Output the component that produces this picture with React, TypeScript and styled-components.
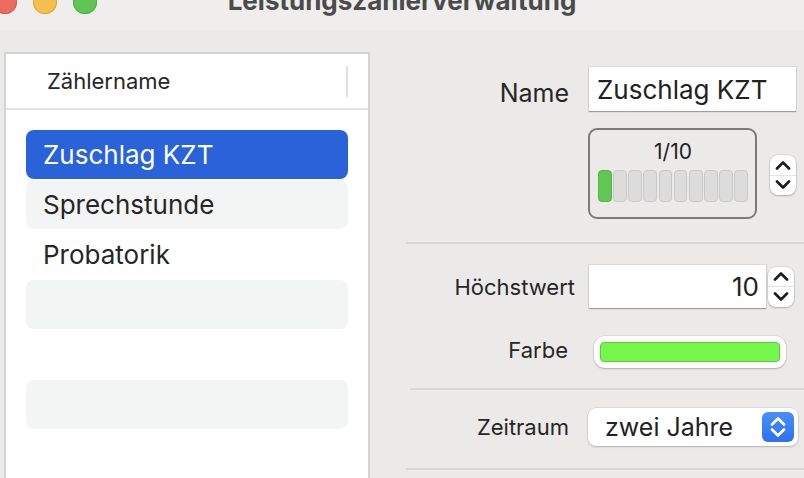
import React from 'react';
import styled, { createGlobalStyle } from 'styled-components';

const Global = createGlobalStyle`
  html, body { margin: 0; padding: 0; width: 804px; height: 478px; overflow: hidden; background: #ebeae8; }
  body { font-family: Inter, "Noto Sans", "Liberation Sans", sans-serif; color: #252525; }
`;

const Window = styled.div`
  width: 804px;
  height: 478px;
  display: flex;
  flex-direction: column;
  overflow: hidden;
  background: #ebeae8;
`;

const TitleBar = styled.div`
  height: 30px;
  flex: none;
  background: #efeeed;
  display: grid;
  grid-template-columns: 1fr auto 1fr;
  align-items: start;
  overflow: hidden;
`;

const Lights = styled.div`
  display: flex;
  gap: 16px;
  margin: -10px 0 0 -7px;
`;

const Light = styled.span<{ $c: string; $b: string }>`
  width: 24px;
  height: 24px;
  border-radius: 50%;
  background: ${(p) => p.$c};
  box-shadow: inset 0 0 0 1px ${(p) => p.$b};
`;

const Title = styled.div`
  font-size: 26px;
  line-height: 26px;
  font-weight: 700;
  color: #4b4b4b;
  margin-top: -12px;
  white-space: nowrap;
`;

const Body = styled.div`
  flex: 1;
  display: flex;
  min-height: 0;
`;

const Sidebar = styled.div`
  width: 366px;
  flex: none;
  box-sizing: border-box;
  margin: 22px 0 0 4px;
  border: 2px solid #d4d3d2;
  border-bottom: none;
  background: #fff;
  display: flex;
  flex-direction: column;
`;

const TableHeader = styled.div`
  height: 56px;
  box-sizing: border-box;
  border-bottom: 2px solid #e3e3e3;
  display: flex;
  align-items: center;
  justify-content: space-between;
  padding: 0 20px 0 41px;
  font-size: 22px;
  color: #262626;
`;

const ColumnSep = styled.span`
  width: 2px;
  height: 31px;
  background: #e0e0e0;
`;

const List = styled.div`
  display: flex;
  flex-direction: column;
  gap: 1px;
  padding: 20px 20px 0;
`;

const ListRow = styled.div<{ $selected?: boolean; $striped?: boolean }>`
  height: 49px;
  border-radius: 8px;
  display: flex;
  align-items: center;
  padding-left: 17px;
  font-size: 26px;
  background: ${(p) => (p.$selected ? '#2a63d9' : p.$striped ? '#f3f4f4' : 'transparent')};
  color: ${(p) => (p.$selected ? '#ffffff' : '#262626')};
`;

const Form = styled.div`
  flex: 1;
  display: flex;
  flex-direction: column;
  padding-top: 37px;
`;

const FormRow = styled.div<{ $labelW: number; $gap: number; $mt: number }>`
  display: grid;
  grid-template-columns: ${(p) => p.$labelW}px auto;
  column-gap: ${(p) => p.$gap}px;
  align-items: center;
  margin-top: ${(p) => p.$mt}px;
`;

const Label = styled.div<{ $size: number; $shift?: number }>`
  text-align: right;
  font-size: ${(p) => p.$size}px;
  color: #262626;
  white-space: nowrap;
  position: relative;
  top: ${(p) => p.$shift ?? 0}px;
`;

const Divider = styled.div<{ $mt: number; $ml: number }>`
  height: 2px;
  background: #d8d7d5;
  margin-top: ${(p) => p.$mt}px;
  margin-left: ${(p) => p.$ml}px;
`;

const TextField = styled.div<{ $w: number; $h: number; $align?: string }>`
  width: ${(p) => p.$w}px;
  height: ${(p) => p.$h}px;
  box-sizing: border-box;
  background: #fff;
  box-shadow: 0 0 0 1px rgba(0, 0, 0, 0.07), 0 1px 1px rgba(0, 0, 0, 0.28);
  display: flex;
  align-items: center;
  justify-content: ${(p) => (p.$align === 'right' ? 'flex-end' : 'flex-start')};
  padding: 0 7px 0 8px;
  font-size: 26px;
  color: #222;
`;

const ControlGroup = styled.div<{ $gap: number }>`
  display: flex;
  align-items: center;
  gap: ${(p) => p.$gap}px;
`;

const CounterBox = styled.div`
  width: 169px;
  height: 91px;
  box-sizing: border-box;
  border: 2px solid #7b7b7b;
  border-radius: 9px;
  padding: 8px 7px 0 8px;
  display: flex;
  flex-direction: column;
  align-items: stretch;
`;

const CounterText = styled.div`
  text-align: center;
  font-size: 21px;
  line-height: 28px;
  color: #1f1f1f;
`;

const Segments = styled.div`
  margin-top: 4px;
  height: 32px;
  display: flex;
  gap: 1.5px;
`;

const Segment = styled.div<{ $on?: boolean }>`
  flex: 1;
  box-sizing: border-box;
  border-radius: 4px;
  background: ${(p) => (p.$on ? '#62c655' : '#dcdcdc')};
  border: 1px solid ${(p) => (p.$on ? '#55b349' : '#c9c9c9')};
`;

const StepperBox = styled.div<{ $mt?: number }>`
  width: 26px;
  height: 40px;
  border-radius: 8px;
  background: #fff;
  box-shadow: 0 0 0 0.5px rgba(0, 0, 0, 0.14), 0 1px 2px rgba(0, 0, 0, 0.22);
  display: flex;
  flex-direction: column;
  margin-top: ${(p) => p.$mt ?? 0}px;
`;

const StepHalf = styled.div<{ $top?: boolean }>`
  flex: 1;
  display: flex;
  align-items: center;
  justify-content: center;
  border-bottom: ${(p) => (p.$top ? '1px solid #e4e4e4' : 'none')};
`;

const ColorWell = styled.div`
  width: 192px;
  height: 32px;
  box-sizing: border-box;
  border-radius: 11px;
  background: #fff;
  box-shadow: 0 0 0 0.5px rgba(0, 0, 0, 0.12), 0 1px 2px rgba(0, 0, 0, 0.2);
  padding: 6px;
  display: flex;
`;

const ColorSwatch = styled.div<{ $color: string }>`
  flex: 1;
  border-radius: 4px;
  background: ${(p) => p.$color};
  border: 1px solid #5ec83e;
`;

const Popup = styled.div`
  width: 210px;
  height: 38px;
  box-sizing: border-box;
  border-radius: 8px;
  background: #fff;
  box-shadow: 0 0 0 0.5px rgba(0, 0, 0, 0.12), 0 1px 2px rgba(0, 0, 0, 0.2);
  display: flex;
  align-items: center;
  justify-content: space-between;
  padding: 0 4px 0 17px;
  font-size: 25px;
  color: #222;
`;

const PopupButton = styled.div`
  width: 32px;
  height: 30px;
  border-radius: 6px;
  background: linear-gradient(#4a8ef9, #2c71ee);
  display: flex;
  align-items: center;
  justify-content: center;
`;

const Chevron = ({ dir, color = '#1e1e1e' }: { dir: 'up' | 'down'; color?: string }) => (
  <svg width="16" height="10" viewBox="0 0 16 10">
    <polyline
      points={dir === 'up' ? '2,8.5 8,2.5 14,8.5' : '2,1.5 8,7.5 14,1.5'}
      fill="none"
      stroke={color}
      strokeWidth="2.7"
      strokeLinecap="round"
      strokeLinejoin="round"
    />
  </svg>
);

const UpDown = styled.div`
  display: flex;
  flex-direction: column;
  align-items: center;
  gap: 2px;
`;

const Stepper = ({ mt }: { mt?: number }) => (
  <StepperBox $mt={mt}>
    <StepHalf $top>
      <Chevron dir="up" />
    </StepHalf>
    <StepHalf>
      <Chevron dir="down" />
    </StepHalf>
  </StepperBox>
);

const items = ['Zuschlag KZT', 'Sprechstunde', 'Probatorik', '', '', ''];

export default function App() {
  return (
    <Window>
      <Global />
      <TitleBar>
        <Lights>
          <Light $c="#ed6a5e" $b="#d8574b" />
          <Light $c="#f5bf4f" $b="#dca53c" />
          <Light $c="#61c554" $b="#4fae43" />
        </Lights>
        <Title>Leistungszählerverwaltung</Title>
        <div />
      </TitleBar>
      <Body>
        <Sidebar>
          <TableHeader>
            <span>Zählername</span>
            <ColumnSep />
          </TableHeader>
          <List>
            {items.map((t, i) => (
              <ListRow key={i} $selected={i === 0} $striped={i % 2 === 1}>
                {t}
              </ListRow>
            ))}
          </List>
        </Sidebar>
        <Form>
          <FormRow $labelW={199} $gap={20} $mt={0}>
            <Label $size={25} $shift={4}>Name</Label>
            <TextField $w={207} $h={44}>Zuschlag KZT</TextField>
          </FormRow>
          <FormRow $labelW={199} $gap={19} $mt={17}>
            <div />
            <ControlGroup $gap={13}>
              <CounterBox>
                <CounterText>1/10</CounterText>
                <Segments>
                  {Array.from({ length: 10 }).map((_, i) => (
                    <Segment key={i} $on={i === 0} />
                  ))}
                </Segments>
              </CounterBox>
              <Stepper mt={3} />
            </ControlGroup>
          </FormRow>
          <Divider $mt={23} $ml={36} />
          <FormRow $labelW={205} $gap={14} $mt={21}>
            <Label $size={22}>Höchstwert</Label>
            <ControlGroup $gap={2}>
              <TextField $w={177} $h={43} $align="right">10</TextField>
              <Stepper />
            </ControlGroup>
          </FormRow>
          <FormRow $labelW={198} $gap={26} $mt={28}>
            <Label $size={22} $shift={-2}>Farbe</Label>
            <ColorWell>
              <ColorSwatch $color="#75f84c" />
            </ColorWell>
          </FormRow>
          <Divider $mt={20} $ml={40} />
          <FormRow $labelW={199} $gap={19} $mt={18}>
            <Label $size={22}>Zeitraum</Label>
            <Popup>
              <span>zwei Jahre</span>
              <PopupButton>
                <UpDown>
                  <Chevron dir="up" color="#fff" />
                  <Chevron dir="down" color="#fff" />
                </UpDown>
              </PopupButton>
            </Popup>
          </FormRow>
          <Divider $mt={22} $ml={36} />
        </Form>
      </Body>
    </Window>
  );
}
